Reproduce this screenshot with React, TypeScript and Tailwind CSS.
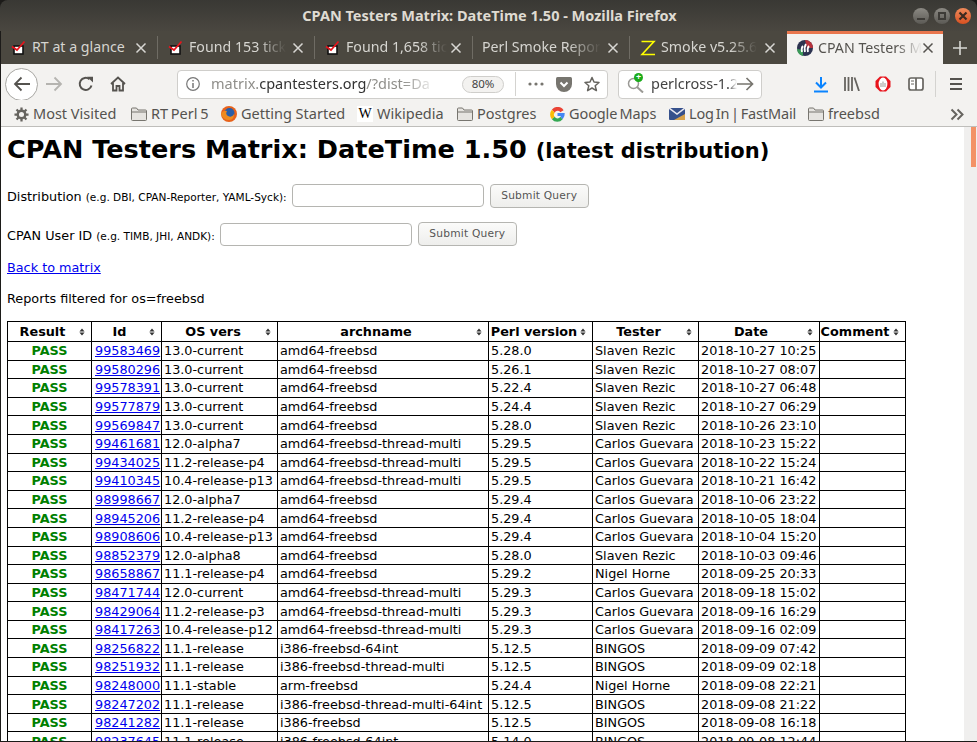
import React from "react";

const ui = "font-['Noto_Sans',sans-serif]";
const dj = "font-['DejaVu_Sans',sans-serif]";

const rows: string[][] = [
  ["99583469","13.0-current","amd64-freebsd","5.28.0","Slaven Rezic","2018-10-27 10:25"],
  ["99580296","13.0-current","amd64-freebsd","5.26.1","Slaven Rezic","2018-10-27 08:07"],
  ["99578391","13.0-current","amd64-freebsd","5.22.4","Slaven Rezic","2018-10-27 06:48"],
  ["99577879","13.0-current","amd64-freebsd","5.24.4","Slaven Rezic","2018-10-27 06:29"],
  ["99569847","13.0-current","amd64-freebsd","5.28.0","Slaven Rezic","2018-10-26 23:10"],
  ["99461681","12.0-alpha7","amd64-freebsd-thread-multi","5.29.5","Carlos Guevara","2018-10-23 15:22"],
  ["99434025","11.2-release-p4","amd64-freebsd-thread-multi","5.29.5","Carlos Guevara","2018-10-22 15:24"],
  ["99410345","10.4-release-p13","amd64-freebsd-thread-multi","5.29.5","Carlos Guevara","2018-10-21 16:42"],
  ["98998667","12.0-alpha7","amd64-freebsd","5.29.4","Carlos Guevara","2018-10-06 23:22"],
  ["98945206","11.2-release-p4","amd64-freebsd","5.29.4","Carlos Guevara","2018-10-05 18:04"],
  ["98908606","10.4-release-p13","amd64-freebsd","5.29.4","Carlos Guevara","2018-10-04 15:20"],
  ["98852379","12.0-alpha8","amd64-freebsd","5.28.0","Slaven Rezic","2018-10-03 09:46"],
  ["98658867","11.1-release-p4","amd64-freebsd","5.29.2","Nigel Horne","2018-09-25 20:33"],
  ["98471744","12.0-current","amd64-freebsd-thread-multi","5.29.3","Carlos Guevara","2018-09-18 15:02"],
  ["98429064","11.2-release-p3","amd64-freebsd-thread-multi","5.29.3","Carlos Guevara","2018-09-16 16:29"],
  ["98417263","10.4-release-p12","amd64-freebsd-thread-multi","5.29.3","Carlos Guevara","2018-09-16 02:09"],
  ["98256822","11.1-release","i386-freebsd-64int","5.12.5","BINGOS","2018-09-09 07:42"],
  ["98251932","11.1-release","i386-freebsd-thread-multi","5.12.5","BINGOS","2018-09-09 02:18"],
  ["98248000","11.1-stable","arm-freebsd","5.24.4","Nigel Horne","2018-09-08 22:21"],
  ["98247202","11.1-release","i386-freebsd-thread-multi-64int","5.12.5","BINGOS","2018-09-08 21:22"],
  ["98241282","11.1-release","i386-freebsd","5.12.5","BINGOS","2018-09-08 16:18"],
  ["98237645","11.1-release","i386-freebsd-64int","5.14.0","BINGOS","2018-09-08 12:44"],
];

const heads: [string, number, string][] = [
  ["Result", 84, "pl-[2px] pr-4"],
  ["Id", 70, "pl-[2px] pr-4"],
  ["OS vers", 116, "pl-[2px] pr-[15px]"],
  ["archname", 211, "pl-[2px] pr-4"],
  ["Perl version", 104, "pl-0 pr-[13px]"],
  ["Tester", 106, "pl-[2px] pr-4"],
  ["Date", 121, "pl-[2px] pr-[18px]"],
  ["Comment", 86, "pl-0 pr-[15px]"],
];

function Check() {
  return (
    <svg width="16" height="16" viewBox="0 0 16 16" className="shrink-0">
      <rect x="3" y="6" width="9" height="8" fill="#fff" stroke="#111" strokeWidth="1.6" />
      <path d="M1 6.5 L6 10 L13.5 1.5" fill="none" stroke="#e8141c" strokeWidth="1.7" />
    </svg>
  );
}

function X({ c = "#d8d7d3" }: { c?: string }) {
  return (
    <svg width="12" height="12" viewBox="0 0 12 12" className="shrink-0">
      <path d="M1.5 1.5 L10.5 10.5 M10.5 1.5 L1.5 10.5" stroke={c} strokeWidth="1.5" />
    </svg>
  );
}

function Tab({ w, icon, label, sep = true, fade = true }: { w: number; icon?: React.ReactNode; label: string; sep?: boolean; fade?: boolean }) {
  return (
    <div style={{ width: w }} className={`shrink-0 h-full flex items-center ${icon ? "pl-3" : "pl-[9px]"} ${sep ? "relative" : ""}`}>
      {icon && <div className="w-5 shrink-0 -ml-1 mr-[3px] flex items-center justify-center">{icon}</div>}
      <div className={`-mt-[2px] whitespace-nowrap text-[14.2px] leading-5 text-[#d6d5d0] ${fade ? "[mask-image:linear-gradient(to_right,black_72%,transparent)]" : ""}`}>
        {label}
      </div>
      <div className="ml-auto mr-[11px]"><X /></div>
      {sep && <div className="absolute right-0 top-[5px] bottom-[5px] w-px bg-[#6f6c64]" />}
    </div>
  );
}

function Folder() {
  return (
    <svg width="16" height="14" viewBox="0 0 16 14" className="shrink-0">
      <path d="M.5 12.5 V2 Q.5 1 1.5 1 H5.5 L7 3 H14.5 Q15.5 3 15.5 4 V12.5 Q15.5 13.5 14.5 13.5 H1.5 Q.5 13.5 .5 12.5 Z" fill="#e6e4e0" stroke="#77756f" />
      <path d="M.5 5 H15.5" stroke="#77756f" />
    </svg>
  );
}

function BM({ w, icon, label, cls = "" }: { w: number; icon: React.ReactNode; label: string; cls?: string }) {
  return (
    <div style={{ width: w }} className="shrink-0 flex items-center h-full">
      <div className="w-4 h-4 flex items-center justify-center shrink-0">{icon}</div>
      <span className={`ml-[4px] whitespace-nowrap text-[14.5px] text-[#55534f] ${cls}`}>{label}</span>
    </div>
  );
}

function Sort() {
  return (
    <svg width="6" height="8" viewBox="0 0 7 9" className="absolute right-[6px] top-[6px]">
      <path d="M3.5 .5 L6.5 3.8 H.5 Z M3.5 8.5 L6.5 5.2 H.5 Z" fill="#333" />
    </svg>
  );
}

function Form({ label, hint }: { label: string; hint: string }) {
  return (
    <div className="flex items-center h-6 text-[12.8px] text-black">
      <span className="whitespace-nowrap pt-[3px]">{label} <span className="text-[10.55px]">{hint}</span></span>
      <input className="ml-[5px] w-[192px] h-[23px] bg-white border border-[#b5b5b1] rounded-[4px] outline-none" />
      <button className="ml-[6px] w-[99px] h-[24px] rounded-[4px] border border-[#b5b5b1] bg-linear-to-b from-[#fbfbfa] to-[#eeeeec] text-[#555] text-[10.67px] tracking-[0.2px]">
        Submit Query
      </button>
    </div>
  );
}

export default function App() {
  return (
    <div className={`w-[977px] h-[742px] overflow-hidden bg-[#1c1b19] flex flex-col ${ui}`}>
      {/* title bar */}
      <div className="h-[31px] shrink-0 rounded-t-[8px] bg-linear-to-b from-[#393834] to-[#4a4740] flex items-center relative">
        <div className="w-full text-center text-[14.5px] font-bold text-[#dfdbd2] pl-[2px]">CPAN Testers Matrix: DateTime 1.50 - Mozilla Firefox</div>
        <div className="absolute right-[6px] top-[8px] flex gap-[5px]">
          <div className="w-4 h-4 rounded-full bg-linear-to-b from-[#8c8a84] to-[#5c5a55] flex items-center justify-center"><div className="w-[8px] h-[2px] mt-[5px] bg-[#3d3b37]" /></div>
          <div className="w-4 h-4 rounded-full bg-linear-to-b from-[#8c8a84] to-[#5c5a55] flex items-center justify-center"><div className="w-[8px] h-[8px] border-2 border-[#3d3b37]" /></div>
          <div className="w-4 h-4 rounded-full bg-linear-to-b from-[#f08a5a] to-[#d8501f] flex items-center justify-center">
            <svg width="10" height="10" viewBox="0 0 10 10"><path d="M1.5 1.5 L8.5 8.5 M8.5 1.5 L1.5 8.5" stroke="#3d2a20" strokeWidth="2.2" /></svg>
          </div>
        </div>
      </div>

      {/* tabs */}
      <div className="h-[33px] shrink-0 bg-[#4b4840] flex items-stretch ml-px">
        <Tab w={157} icon={<Check />} label="RT at a glance" fade={false} />
        <Tab w={157} icon={<Check />} label="Found 153 tick" />
        <Tab w={158} icon={<Check />} label="Found 1,658 tic" />
        <Tab w={157} label="Perl Smoke Repor" />
        <Tab w={157} sep={false} label="Smoke v5.25.6" icon={
          <svg width="16" height="16" viewBox="0 0 16 16"><path d="M1.5 1.5 H14 L2 14.5 H15" fill="none" stroke="#ffff00" strokeWidth="1.6" /></svg>
        } />
        <div className="w-[156px] shrink-0 h-full bg-[#f3f2f0] border-t-[3px] border-[#e9764d] flex items-center pl-[10px]">
          <svg width="16" height="16" viewBox="0 0 16 16" className="shrink-0 -mt-[2px]">
            <circle cx="8" cy="8" r="8" fill="#2c3350" />
            <path d="M8 0 A8 8 0 0 1 16 8 H10 Z" fill="#b8323c" />
            <path d="M0 9 A8 8 0 0 0 6 16 V10 Z" fill="#3a9a58" />
            <path d="M5 12 Q4 8 6 6 M8 12 Q7 7 9 4 M11 12 Q10 8 12 6" fill="none" stroke="#fff" strokeWidth="1.8" />
          </svg>
          <div className="ml-[5px] -mt-[2px] whitespace-nowrap text-[14.2px] leading-5 text-[#55534f] [mask-image:linear-gradient(to_right,black_75%,transparent)]">CPAN Testers M</div>
          <div className="ml-auto mr-[11px] -mt-[2px]"><X c="#55534f" /></div>
        </div>
        <div className="flex-1 flex items-center justify-center">
          <svg width="14" height="14" viewBox="0 0 14 14"><path d="M7 0 V14 M0 7 H14" stroke="#d8d7d3" strokeWidth="1.6" /></svg>
        </div>
      </div>

      {/* nav toolbar */}
      <div className="h-[36px] shrink-0 bg-[#f3f2f0] pt-[4px] flex items-center ml-px">
        <div className="w-[33px] h-[33px] ml-[4px] rounded-full bg-white border border-[#a8a7a3] flex items-center justify-center">
          <svg width="18" height="16" viewBox="0 0 18 16"><path d="M17 8 H2 M8.5 1.5 L2 8 L8.5 14.5" fill="none" stroke="#55534f" strokeWidth="1.8" /></svg>
        </div>
        <svg width="18" height="16" viewBox="0 0 18 16" className="ml-[7px]"><path d="M1 8 H16 M9.5 1.5 L16 8 L9.5 14.5" fill="none" stroke="#b5b4b0" strokeWidth="1.8" /></svg>
        <svg width="16" height="16" viewBox="0 0 16 16" className="ml-[15px]"><path d="M13.5 9.5 A6 6 0 1 1 11.5 3.2" fill="none" stroke="#55534f" strokeWidth="2" /><path d="M9 .8 H15 V6.5 Z" fill="#55534f" /></svg>
        <svg width="16" height="16" viewBox="0 0 16 16" className="ml-[16px]"><path d="M1 8 L8 1.5 L15 8 M3 7 V14.5 H6.5 V10 H9.5 V14.5 H13 V7" fill="none" stroke="#55534f" strokeWidth="1.8" /></svg>

        <div className="ml-[51px] w-[431px] h-[29px] bg-white border border-[#cfcecb] rounded-[4px] flex items-center pl-[7px] shrink-0">
          <svg width="16" height="16" viewBox="0 0 16 16" className="shrink-0"><circle cx="8" cy="8" r="6.3" fill="none" stroke="#777" strokeWidth="1.2" /><path d="M8 7 V12 M8 4 V5.5" stroke="#777" strokeWidth="1.5" /></svg>
          <div className="ml-[10px] w-[226px] whitespace-nowrap text-[14.5px] text-[#8f8e8a] [mask-image:linear-gradient(to_right,black_85%,transparent)]">
            matrix.<span className="text-[#333]">cpantesters.org</span>/?dist=Da
          </div>
          <div className="ml-[25px] w-[42px] h-[17px] rounded-full border border-[#cfcecb] bg-[#f3f2f0] text-[11.5px] text-[#444] flex items-center justify-center shrink-0">80%</div>
          <div className="ml-[11px] w-px h-[24px] bg-[#d4d3d0] shrink-0" />
          <svg width="16" height="4" viewBox="0 0 16 4" className="ml-[12px] shrink-0"><circle cx="2" cy="2" r="1.6" fill="#77756f" /><circle cx="8" cy="2" r="1.6" fill="#77756f" /><circle cx="14" cy="2" r="1.6" fill="#77756f" /></svg>
          <svg width="16" height="15" viewBox="0 0 16 15" className="ml-[12px] shrink-0"><path d="M1.5 0 H14.5 Q16 0 16 1.5 V7 A8 8 0 0 1 0 7 V1.5 Q0 0 1.5 0 Z" fill="#77756f" /><path d="M4.5 5.5 L8 9 L11.5 5.5" fill="none" stroke="#fff" strokeWidth="2" /></svg>
          <svg width="16" height="16" viewBox="0 0 16 16" className="ml-[12px] shrink-0"><path d="M8 1.5 L10 6 L15 6.5 L11.2 9.8 L12.4 14.6 L8 12 L3.6 14.6 L4.8 9.8 L1 6.5 L6 6 Z" fill="none" stroke="#66645f" strokeWidth="1.5" strokeLinejoin="round" /></svg>
        </div>

        <div className="ml-[10px] w-[144px] h-[29px] bg-white border border-[#cfcecb] rounded-[4px] flex items-center pl-[8px] shrink-0">
          <div className="relative w-[17px] h-[17px] shrink-0">
            <svg width="17" height="17" viewBox="0 0 17 17"><circle cx="6.5" cy="7.5" r="5" fill="none" stroke="#9a9995" strokeWidth="1.5" /><path d="M10 11 L16 16.5" stroke="#9a9995" strokeWidth="2" /></svg>
            <div className="absolute -top-[3px] left-[7px] w-[9px] h-[9px] rounded-full bg-[#1aab1a] text-white text-[9px] leading-[8px] text-center font-bold">+</div>
          </div>
          <div className="ml-[7px] w-[86px] whitespace-nowrap text-[14.5px] text-[#444] [mask-image:linear-gradient(to_right,black_90%,transparent)]">perlcross-1.2</div>
          <svg width="17" height="14" viewBox="0 0 17 14" className="shrink-0"><path d="M0 7 H15.5 M9.5 1 L15.5 7 L9.5 13" fill="none" stroke="#77756f" strokeWidth="1.7" /></svg>
        </div>

        <svg width="16" height="17" viewBox="0 0 16 17" className="ml-[51px] shrink-0"><path d="M8 1 V11 M3 6.5 L8 11.5 L13 6.5" fill="none" stroke="#0a84ff" strokeWidth="2" /><path d="M1 15.5 H15" stroke="#0a84ff" strokeWidth="2" /></svg>
        <svg width="16" height="14" viewBox="0 0 16 14" className="ml-[15px] shrink-0"><path d="M1 0 V14 M4.5 0 V14 M8 0 V14 M10.5 .5 L15 14" fill="none" stroke="#66645f" strokeWidth="1.8" /></svg>
        <svg width="16" height="16" viewBox="0 0 16 16" className="ml-[15px] shrink-0"><path d="M5 .5 H11 L15.5 5 V11 L11 15.5 H5 L.5 11 V5 Z" fill="#e8141c" /><ellipse cx="8" cy="8" rx="4.4" ry="6.4" fill="#fff" /><path d="M6 11 V7 M8 11 V5.5 M10 11 V7" stroke="#b9b8b4" strokeWidth="1.4" /></svg>
        <svg width="16" height="14" viewBox="0 0 16 14" className="ml-[17px] shrink-0"><rect x="1" y="1" width="14" height="12" rx="2" fill="#fff" stroke="#66645f" strokeWidth="1.7" /><path d="M8 1 V13" stroke="#66645f" strokeWidth="1.7" /><path d="M3 4 H6 M3 7 H6" stroke="#66645f" /></svg>
        <div className="ml-[11px] w-px h-[26px] bg-[#d4d3d0] shrink-0" />
        <svg width="14" height="12" viewBox="0 0 14 12" className="ml-[13px] shrink-0"><path d="M1 1 H13 M1 6 H13 M1 11 H13" stroke="#55534f" strokeWidth="1.8" /></svg>
      </div>

      {/* bookmarks */}
      <div className="h-[27px] shrink-0 bg-[#f3f2f0] border-b border-[#bfbebb] ml-px pl-[12px] pt-[2px] flex items-center">
        <BM w={118} label="Most Visited" icon={
          <svg width="15" height="15" viewBox="0 0 16 16"><circle cx="8" cy="8" r="4" fill="none" stroke="#66645f" strokeWidth="2.6" /><path d="M8 .5 V3.5 M8 12.5 V15.5 M.5 8 H3.5 M12.5 8 H15.5 M2.7 2.7 L4.8 4.8 M11.2 11.2 L13.3 13.3 M13.3 2.7 L11.2 4.8 M4.8 11.2 L2.7 13.3" stroke="#66645f" strokeWidth="2.4" /></svg>
        } />
        <BM w={90} label="RT Perl 5" cls="[word-spacing:-1px]" icon={<Folder />} />
        <BM w={136} label="Getting Started" icon={
          <svg width="16" height="16" viewBox="0 0 16 16"><circle cx="8" cy="8" r="8" fill="#e8621a" /><circle cx="8.5" cy="7" r="5" fill="#2a5ea8" /><path d="M0 8 Q2 14 8 14 Q13 14 13 8 Q11 12 7 10 Q4 8 6 5 Q2 4 0 8 Z" fill="#f08a1e" /></svg>
        } />
        <BM w={100} label="Wikipedia" icon={
          <div className="w-4 h-4 bg-white flex items-center justify-center text-black text-[14px] leading-none font-['Liberation_Serif',serif]">W</div>
        } />
        <BM w={92} label="Postgres" icon={<Folder />} />
        <BM w={120} label="Google Maps" cls="[word-spacing:-1.5px] tracking-[-0.1px]" icon={
          <svg width="15" height="15" viewBox="0 0 16 16"><path d="M14.5 3.5 A7.5 7.5 0 0 0 2 3 L5 6 A3.5 3.5 0 0 1 11 5.5 Z" fill="#ea4335" /><path d="M2 3 A7.5 7.5 0 0 0 2 13 L5 10.5 A3.5 3.5 0 0 1 5 6 Z" fill="#fbbc05" /><path d="M2 13 A7.5 7.5 0 0 0 13.5 13 L11 10.5 A3.5 3.5 0 0 1 5 10.5 Z" fill="#34a853" /><path d="M8 6.5 H15.7 Q16 10.5 13.5 13 L11 10.5 Q11.5 10 11.7 9.5 H8 Z" fill="#4285f4" /></svg>
        } />
        <BM w={139} label="Log In | FastMail" cls="[word-spacing:-1.8px] tracking-[-0.15px]" icon={
          <svg width="16" height="12" viewBox="0 0 16 12"><rect x="0" y="0" width="16" height="12" rx="1" fill="#36518c" /><path d="M0 0 L8 6 L16 0" fill="none" stroke="#e8e8f0" strokeWidth="1.5" /><path d="M5 12 L16 6 V12 Z" fill="#d8a24a" /></svg>
        } />
        <BM w={120} label="freebsd" icon={<Folder />} />
        <svg width="14" height="13" viewBox="0 0 14 13" className="shrink-0 ml-[22px]"><path d="M1.5 1.5 L6.5 6.5 L1.5 11.5 M7.5 1.5 L12.5 6.5 L7.5 11.5" fill="none" stroke="#66645f" strokeWidth="2" /></svg>
      </div>

      {/* page + scrollbar */}
      <div className="flex-1 min-h-0 flex ml-px mb-px overflow-hidden">
        <main className={`w-[963px] shrink-0 bg-white pl-[6px] overflow-hidden text-black ${dj}`}>
          <h1 className="mt-[6px] h-[32px] font-bold text-[25.55px] leading-[32px] whitespace-nowrap">
            CPAN Testers Matrix: DateTime 1.50 <span className="text-[21px]">(latest distribution)</span>
          </h1>
          <div className="mt-[18.5px]"><Form label="Distribution" hint="(e.g. DBI, CPAN-Reporter, YAML-Syck):" /></div>
          <div className="mt-[14.6px]"><Form label="CPAN User ID" hint="(e.g. TIMB, JHI, ANDK):" /></div>
          <a className="block mt-[13.9px] text-[12.8px] leading-[16px] text-[#0000ee] underline">Back to matrix</a>
          <p className="mt-[15px] text-[12.8px] leading-[16px]">Reports filtered for os=freebsd</p>
          <table className="mt-[14px] table-fixed w-[899px] border-collapse border border-black text-[12.8px] leading-[15px]">
            <colgroup>
              {heads.map(([h, w]) => <col key={h} style={{ width: w }} />)}
            </colgroup>
            <thead>
              <tr className="h-[20px]">
                {heads.map(([h, , pad]) => (
                  <th key={h} className={`relative border border-black p-0 ${pad} font-bold text-center whitespace-nowrap text-black`}>
                    {h}<Sort />
                  </th>
                ))}
              </tr>
            </thead>
            <tbody>
              {rows.map((r) => (
                <tr key={r[0]} className="h-[18.6px]">
                  <td className="border border-black p-0 text-center font-bold text-[#008000]">PASS</td>
                  <td className="border border-black p-0 pl-[3px]"><a className="text-[#0000ee] underline">{r[0]}</a></td>
                  {r.slice(1).map((c, i) => (
                    <td key={i} className="border border-black p-0 pl-[2px] whitespace-nowrap overflow-hidden">{c}</td>
                  ))}
                  <td className="border border-black p-0" />
                </tr>
              ))}
            </tbody>
          </table>
        </main>
        <div className="flex-1 bg-[#f0efee] pl-[7px]">
          <div className="w-[5px] h-[40px] bg-[#f39267]" />
        </div>
      </div>
    </div>
  );
}
